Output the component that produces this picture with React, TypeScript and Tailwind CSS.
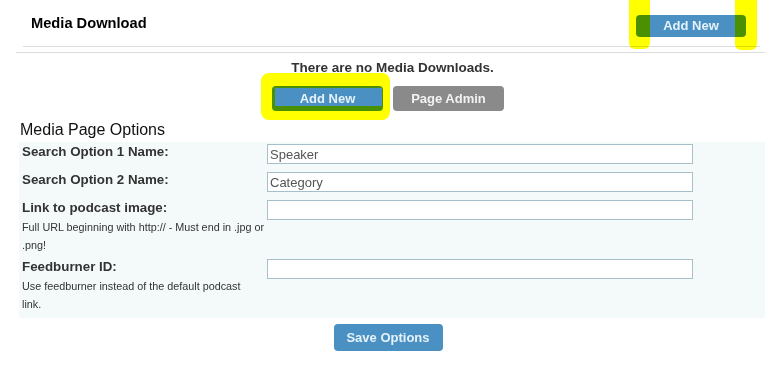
import React from "react";

const font = "font-['Liberation_Sans',Arial,sans-serif]";

function Row({
  label,
  value,
  help,
}: {
  label: string;
  value?: string;
  help?: string[];
}) {
  return (
    <div className="flex">
      <div className="w-[248px] pl-[3px] shrink-0">
        <div className="text-[13.33px] leading-[20px] font-bold text-[#333]">{label}</div>
        {help && (
          <div className="text-[10.8px] leading-[18px] text-[#333] pb-[3px]">
            {help.map((l, i) => (
              <div key={i} className="whitespace-nowrap">{l}</div>
            ))}
          </div>
        )}
      </div>
      <div className="pt-[2px]">
        <input
          readOnly
          value={value ?? ""}
          className="block w-[426px] h-[20px] border border-[#a6bfcb] bg-white px-[2px] text-[13px] text-[#555] outline-none"
        />
      </div>
    </div>
  );
}

export default function App() {
  return (
    <div className={`relative w-[765px] h-[370px] bg-white overflow-hidden ${font}`}>
      {/* header */}
      <div className="pl-4">
        <div className="ml-[7px] mr-[5px] h-[47px] border-b border-[#dcdcdc] flex items-start justify-between pt-[15px] pl-[8px] pr-[14px]">
          <div className="text-[14.67px] leading-[16px] font-bold text-black">Media Download</div>
          <button className="w-[110px] h-[22px] rounded-[4px] bg-[#4a90c2] text-[13px] font-bold text-[#e6f2fb]">
            Add New
          </button>
        </div>
        <div className="mt-[5px] border-t border-[#dcdcdc]" />
      </div>

      {/* empty state */}
      <div className="pl-4 pr-[5px]">
        <div className="mt-[7px] pl-[9px] text-center text-[13.5px] leading-[15px] font-bold text-[#333]">
          There are no Media Downloads.
        </div>
        <div className="mt-[11px] flex justify-center gap-[10px]">
          <button className="w-[111px] h-[25px] rounded-[4px] bg-[#4a90c2] text-[13px] font-bold text-[#e6f2fb]">
            Add New
          </button>
          <button className="w-[111px] h-[25px] rounded-[4px] bg-[#8a8a8a] text-[13px] font-bold text-[#f2f2f2]">
            Page Admin
          </button>
        </div>
      </div>

      {/* options */}
      <div className="pl-[19px]">
        <div className="mt-[10px] pl-[1px] text-[16px] leading-[18px] text-[#111]">Media Page Options</div>
        <div className="mt-[3px] bg-[#f4fafa] pb-[2px]">
          <div className="h-[28px]">
            <Row label="Search Option 1 Name:" value="Speaker" />
          </div>
          <div className="h-[28px]">
            <Row label="Search Option 2 Name:" value="Category" />
          </div>
          <Row
            label="Link to podcast image:"
            help={["Full URL beginning with http:// - Must end in .jpg or", ".png!"]}
          />
          <Row
            label="Feedburner ID:"
            help={["Use feedburner instead of the default podcast", "link."]}
          />
        </div>
      </div>
      <div className="pl-4 pr-[5px] flex justify-center mt-[6px]">
        <button className="w-[109px] h-[27px] rounded-[4px] bg-[#4a90c2] text-[13px] font-bold text-[#e6f2fb]">
          Save Options
        </button>
      </div>

      {/* highlighter marks */}
      <div className="absolute left-[629px] top-0 w-[21px] h-[49px] rounded-b-[6px] bg-[#ffff00] mix-blend-multiply" />
      <div className="absolute left-[735px] top-0 w-[22px] h-[50px] rounded-b-[6px] bg-[#ffff00] mix-blend-multiply" />
      <div className="absolute left-[261px] top-[73px] w-[129px] h-[47px] rounded-[8px] border-[#ffff00] border-l-[14px] border-t-[15px] border-r-[8px] border-b-[14px] mix-blend-multiply" />
    </div>
  );
}
